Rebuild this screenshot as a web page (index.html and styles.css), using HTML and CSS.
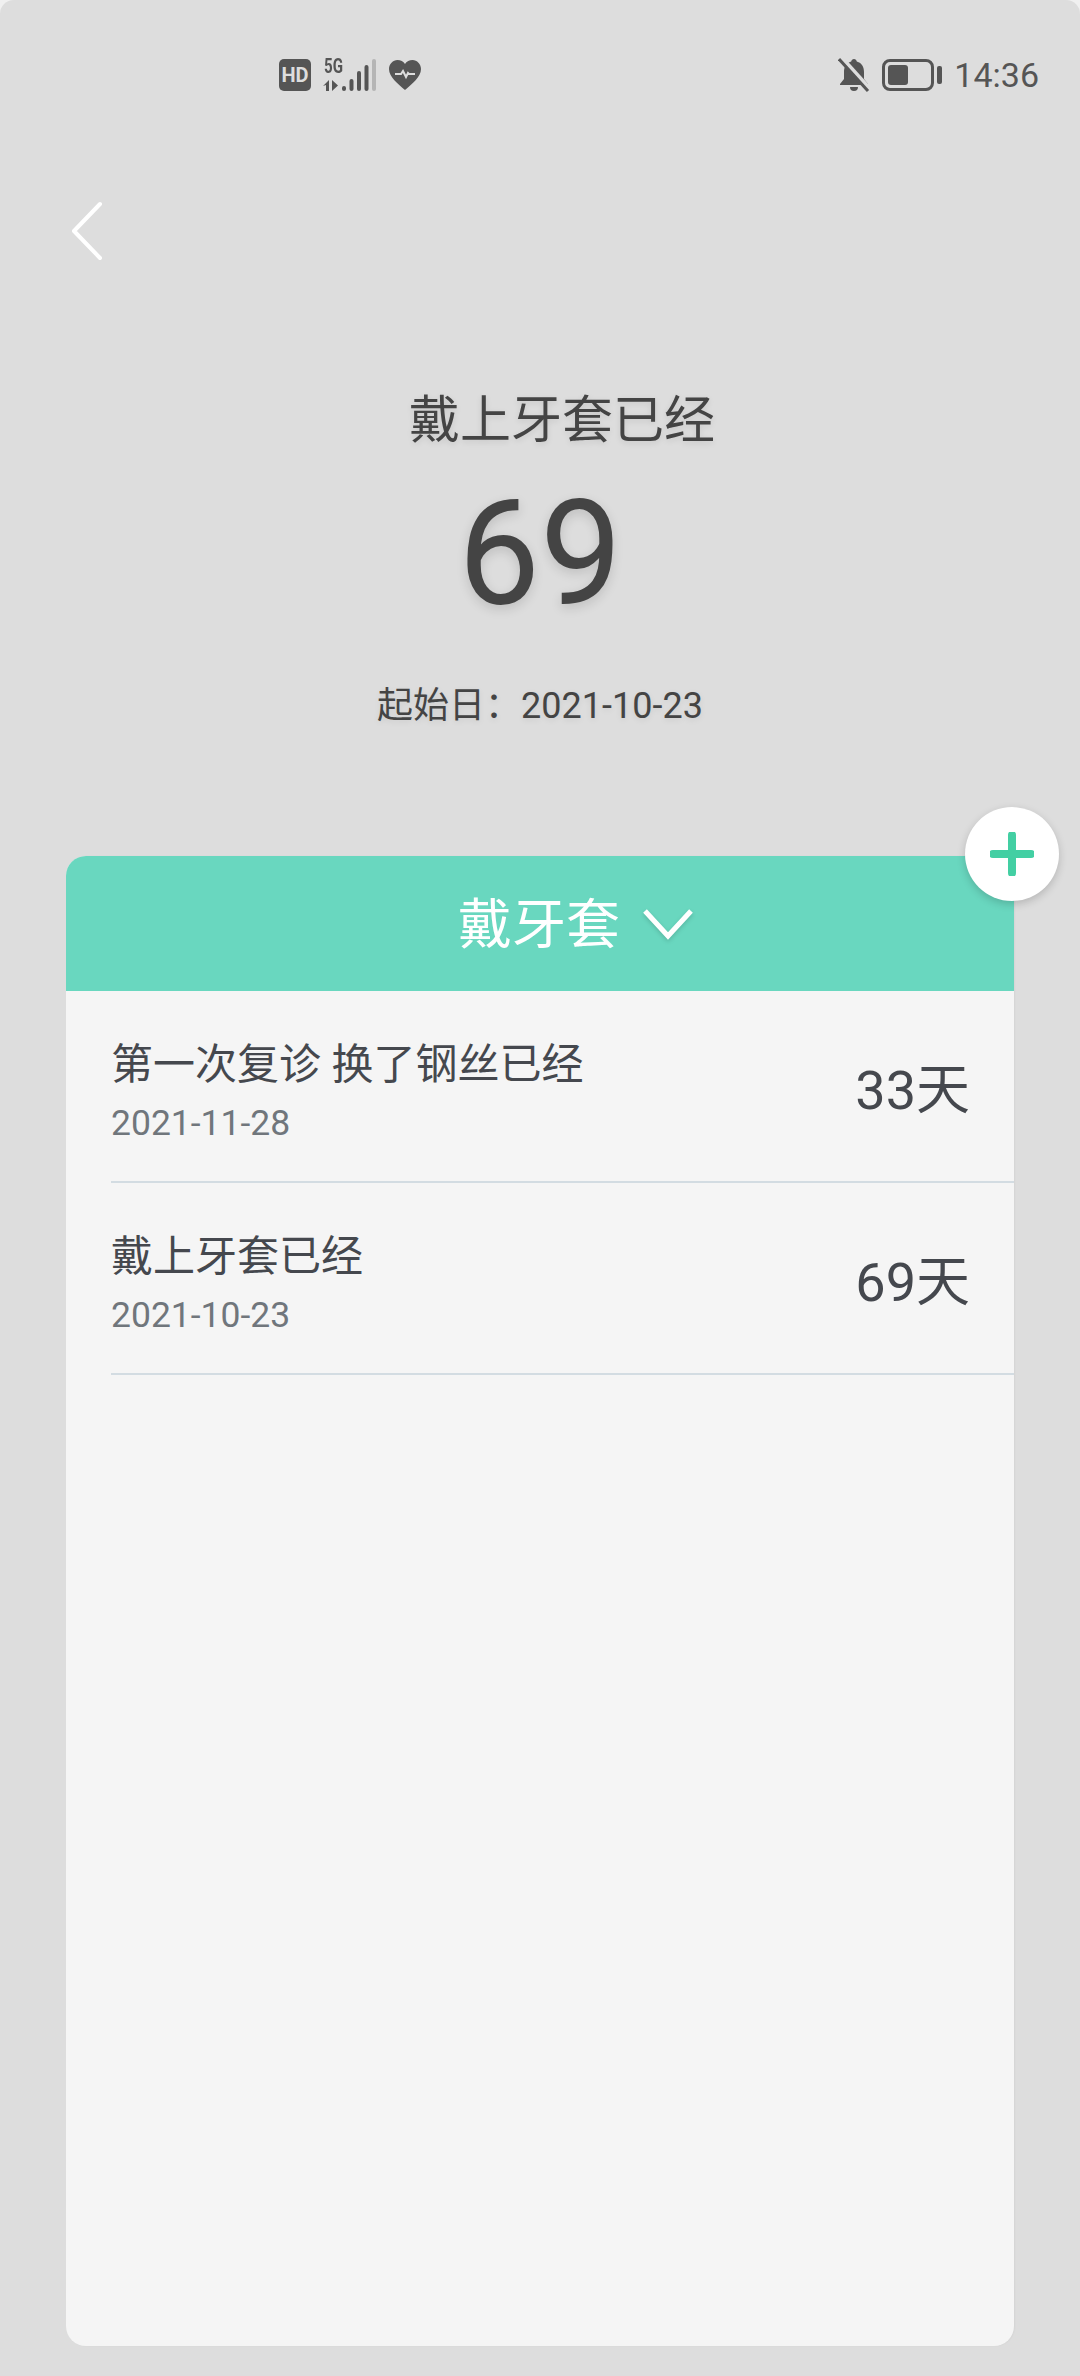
FILE: index.html
```html
<!DOCTYPE html>
<html lang="zh-CN">
<head>
	<meta charset="UTF-8">
	<title>Document</title>
	<link rel="stylesheet" href="styles.css">
</head>
<body>
	<div class="status">
		<div class="status-left">
			<span class="hd">HD</span>
			<div class="net">
				<span class="net-label">5G</span>
				<svg width="54" height="33" viewBox="0 0 54 33">
					<path d="M0 27l6-6v11H3v-6zM9 21l6 5.500-6 5.500z" fill="#555"/>
					<rect x="19" y="27" width="4" height="5" rx="2" fill="#555"/>
					<rect x="26.500" y="20" width="4" height="12" rx="2" fill="#555"/>
					<rect x="34" y="12" width="4" height="20" rx="2" fill="#555"/>
					<rect x="41.500" y="6" width="4" height="26" rx="2" fill="#555"/>
					<rect x="49" y="0" width="4" height="32" rx="2" fill="#b5b5b5"/>
				</svg>
			</div>
			<svg class="heart" width="32" height="30" viewBox="0 0 32 30">
				<path d="M16 30C9 24 0 17 0 9C0 4 4 0 8.500 0C11.500 0 14.500 1.500 16 4C17.500 1.500 20.500 0 23.500 0C28 0 32 4 32 9C32 17 23 24 16 30Z" fill="#555"/>
				<path d="M6 14h6l2-3 3 6 2-4 1 1h6" fill="none" stroke="#ddd" stroke-width="2"/>
			</svg>
		</div>
		<div class="status-right">
			<svg class="bell" width="32" height="34" viewBox="0 0 32 34">
				<path d="M16 1c1.500 0 2.500 1 2.800 2.500C24 5 26 9 26 14v7l4 5v1H2v-1l4-5v-7c0-5 2-9 7.200-10.500C13.500 2 14.500 1 16 1zM12 29h8a4 4 0 0 1-8 0z" fill="#555"/>
				<path d="M4 0l28 31" stroke="#ddd" stroke-width="4"/>
				<path d="M1 1l29 32" stroke="#555" stroke-width="3"/>
			</svg>
			<div class="battery"><div class="battery-fill"></div></div>
			<div class="battery-nub"></div>
			<span class="time">14:36</span>
		</div>
	</div>

	<div class="back">
		<svg width="34" height="60" viewBox="0 0 34 60">
			<path d="M30 3L4 30l26 27" fill="none" stroke="#fff" stroke-width="4" stroke-linecap="round" stroke-linejoin="round"/>
		</svg>
	</div>

	<div class="hero">
		<div class="hero-title">戴上牙套已经</div>
		<div class="hero-num">69</div>
		<div class="hero-date">起始日：2021-10-23</div>
	</div>

	<div class="card">
		<div class="card-head">
			<span class="card-name">戴牙套</span>
			<svg class="card-arrow" width="52" height="34" viewBox="0 0 52 34">
				<path d="M3 4l23 25L49 4" fill="none" stroke="#fff" stroke-width="5"/>
			</svg>
		</div>
		<div class="add">
			<svg width="44" height="44" viewBox="0 0 44 44">
				<path d="M22 3v38M3 22h38" stroke="#43cfa3" stroke-width="8" stroke-linecap="round"/>
			</svg>
		</div>
		<ul class="list">
			<li class="row">
				<div class="row-main">
					<div class="row-title">第一次复诊 换了钢丝已经</div>
					<div class="row-date">2021-11-28</div>
				</div>
				<div class="row-days">33天</div>
			</li>
			<li class="row">
				<div class="row-main">
					<div class="row-title">戴上牙套已经</div>
					<div class="row-date">2021-10-23</div>
				</div>
				<div class="row-days">69天</div>
			</li>
		</ul>
	</div>
</body>
</html>
```

FILE: styles.css
```css
*{
	margin:0;
	padding:0;
	box-sizing:border-box;
}
html,body{
	width:1080px;
	height:2376px;
	overflow:hidden;
}
html{
	background-color:#f0f0f0;
}
body{
	background-color:#ddd;
	border-radius:14px 14px 0 0;
	font-family:Roboto,"Noto Sans CJK SC",sans-serif;
	color:#444;
}
.status{
	height:150px;
	padding:0 41px 0 279px;
	display:flex;
	align-items:center;
	justify-content:space-between;
	color:#555;
}
.status-left,.status-right{
	display:flex;
	align-items:center;
}
.hd{
	width:32px;
	height:32px;
	border-radius:5px;
	background-color:#555;
	color:#ddd;
	font-size:20px;
	font-weight:700;
	line-height:32px;
	text-align:center;
}
.net{
	position:relative;
	width:54px;
	height:33px;
	margin-left:12px;
	display:flex;
}
.net-label{
	position:absolute;
	left:1px;
	top:-3px;
	font-size:21px;
	font-weight:700;
	line-height:20px;
	transform:scaleX(.72);
	transform-origin:left center;
}
.heart{
	margin-left:12px;
}
.bell{
	margin-right:12px;
}
.battery{
	width:52px;
	height:32px;
	border:3px solid #555;
	border-radius:8px;
	padding:3px;
}
.battery-fill{
	width:20px;
	height:100%;
	background-color:#555;
	border-radius:3px;
}
.battery-nub{
	width:5px;
	height:18px;
	margin-left:3px;
	background-color:#555;
	border-radius:2px;
}
.time{
	margin-left:12px;
	font-size:34px;
	line-height:40px;
}
.back{
	height:60px;
	margin-top:51px;
	padding-left:70px;
}
.hero{
	height:595px;
	padding-top:125px;
	text-align:center;
}
.hero-title{
	padding-left:44px;
	font-size:51px;
	line-height:70px;
	text-shadow:0 2px 6px rgba(0,0,0,.1);
}
.hero-num{
	margin-top:14px;
	font-size:146px;
	line-height:170px;
	text-shadow:0 4px 12px rgba(0,0,0,.14);
}
.hero-date{
	margin-top:41px;
	font-size:36px;
	line-height:50px;
	text-shadow:0 2px 6px rgba(0,0,0,.08);
}
.card{
	position:relative;
	width:948px;
	height:1490px;
	margin-left:66px;
	background-color:#f5f5f5;
	border-radius:20px;
	box-shadow:1px 0 2px rgba(0,0,0,.04);
}
.card-head{
	height:135px;
	padding-left:72px;
	background-color:#69d7bf;
	border-radius:20px 20px 0 0;
	display:flex;
	align-items:center;
	justify-content:center;
	gap:22px;
	color:#fff;
}
.card-name{
	padding-top:5px;
	font-size:54px;
	line-height:70px;
}
.card-arrow{
	filter:drop-shadow(0 2px 2px rgba(0,0,0,.15));
}
.add{
	position:absolute;
	top:-49px;
	right:-45px;
	width:94px;
	height:94px;
	border-radius:50%;
	background-color:#fff;
	box-shadow:0 3px 8px rgba(0,0,0,.18);
	display:flex;
	align-items:center;
	justify-content:center;
}
.list{
	list-style:none;
	padding-left:45px;
}
.row{
	height:192px;
	padding:9px 44px 0 0;
	border-bottom:2px solid #d3dce2;
	display:flex;
	align-items:center;
	justify-content:space-between;
}
.row-title{
	font-size:42px;
	line-height:56px;
	color:#45484e;
}
.row-date{
	margin-top:8px;
	font-size:35.500px;
	line-height:44px;
	color:#70767c;
}
.row-days{
	font-size:54px;
	line-height:70px;
	color:#45484e;
}
```
